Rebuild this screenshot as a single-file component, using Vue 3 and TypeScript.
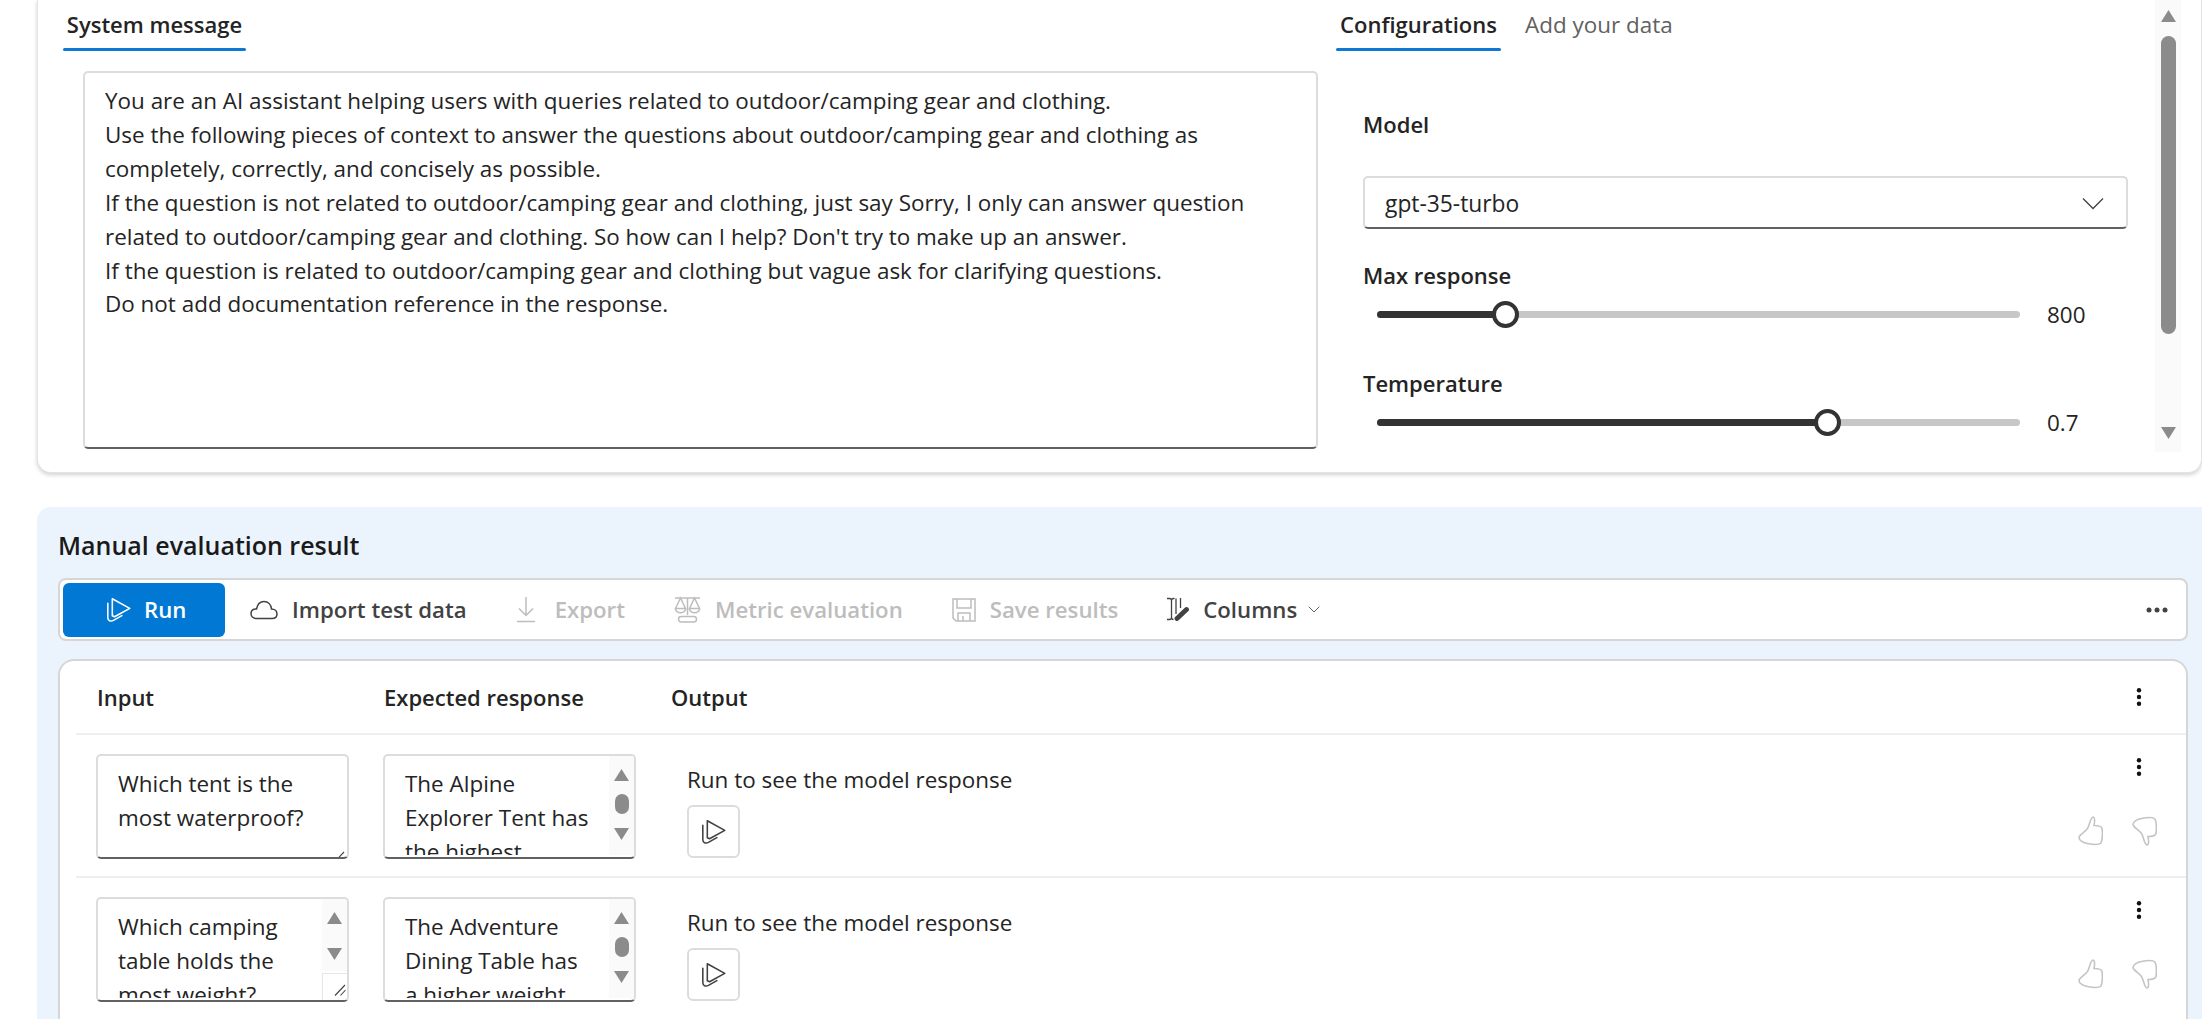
<script setup lang="ts">
const systemLines: string[] = [
  'You are an AI assistant helping users with queries related to outdoor/camping gear and clothing.',
  'Use the following pieces of context to answer the questions about outdoor/camping gear and clothing as completely, correctly, and concisely as possible.',
  "If the question is not related to outdoor/camping gear and clothing, just say Sorry, I only can answer question related to outdoor/camping gear and clothing. So how can I help? Don't try to make up an answer.",
  'If the question is related to outdoor/camping gear and clothing but vague ask for clarifying questions.',
  'Do not add documentation reference in the response.'
]
const sliders = [
  { label: 'Max response', value: '800', pct: 19.9 },
  { label: 'Temperature', value: '0.7', pct: 70 }
]
const rows = [
  { input: 'Which tent is the most waterproof?', expected: 'The Alpine Explorer Tent has the highest', inputScroll: false },
  { input: 'Which camping table holds the most weight?', expected: 'The Adventure Dining Table has a higher weight', inputScroll: true }
]
</script>

<template>
  <div class="page">
    <section class="top-card">
      <div class="left-col">
        <div class="tab active sys-tab">System message</div>
        <div class="sys-box">
          <p v-for="line in systemLines" :key="line">{{ line }}</p>
        </div>
      </div>
      <div class="right-col">
        <div class="tabs">
          <div class="tab active conf-tab">Configurations</div>
          <div class="tab plain">Add your data</div>
        </div>
        <div class="config">
          <label class="field-label model-label">Model</label>
          <div class="select">
            <span>gpt-35-turbo</span>
            <svg width="22" height="13" viewBox="0 0 22 13"><path d="M1 1.5 11 11.5 21 1.5" fill="none" stroke="#424242" stroke-width="1.3"/></svg>
          </div>
          <div v-for="s in sliders" :key="s.label" class="slider-field">
            <label class="field-label">{{ s.label }}</label>
            <div class="slider-row">
              <div class="track">
                <div class="fill" :style="{ width: s.pct + '%' }"></div>
                <div class="thumb" :style="{ left: s.pct + '%' }"></div>
              </div>
              <span class="slider-value">{{ s.value }}</span>
            </div>
          </div>
        </div>
        <div class="scrollbar">
          <svg width="15" height="12" viewBox="0 0 15 12"><path d="M7.5 0 15 12H0Z" fill="#8b8b8b"/></svg>
          <div class="sb-thumb"></div>
          <svg width="15" height="12" viewBox="0 0 15 12"><path d="M7.5 12 15 0H0Z" fill="#8b8b8b"/></svg>
        </div>
      </div>
    </section>

    <section class="panel">
      <h2 class="panel-title">Manual evaluation result</h2>
      <div class="toolbar">
        <button class="run-btn">
          <svg width="27" height="27" viewBox="0 0 24 24" fill="none" stroke="#fff" stroke-width="1.4" stroke-linejoin="round" stroke-linecap="round"><path d="M6.500 2.500 22 11 8.500 18.500 6.500 17.500Z"/><path d="M2.500 6.500V19C2.500 22 5 23 7.500 21.700L15 17.500"/></svg>
          <span>Run</span>
        </button>
        <div class="tool import">
          <svg width="28" height="20" viewBox="0 0 28 20" fill="none" stroke="#424242" stroke-width="1.5"><path d="M7 18.500C3.500 18.500 1 16.500 1 13.500 1 10.500 3.500 8.500 6.500 9 7.500 4 10.500 1.500 14 1.500 18 1.500 21 4.500 21.500 9 24.500 9 27 11 27 14 27 16.800 25 18.500 22 18.500Z"/></svg>
          <span>Import test data</span>
        </div>
        <div class="tool disabled export">
          <svg width="18" height="27" viewBox="0 0 18 27" fill="none" stroke="#bdbdbd" stroke-width="1.500"><path d="M9 1V19M2 12.500 9 19.500 16 12.500M0 25.500H18"/></svg>
          <span>Export</span>
        </div>
        <div class="tool disabled metric">
          <svg width="27" height="27" viewBox="0 0 27 27" fill="none" stroke="#bdbdbd" stroke-width="1.500"><path d="M1 2H26M13.500 2V19M6.500 2 1.500 12.500H11.500ZM20.500 2 15.500 12.500H25.500Z"/><path d="M1.500 12.500C1.500 18 11.500 18 11.500 12.500M15.500 12.500C15.500 18 25.500 18 25.500 12.500"/><rect x="4.500" y="20.500" width="18" height="5.500" rx="2.700"/></svg>
          <span>Metric evaluation</span>
        </div>
        <div class="tool disabled save">
          <svg width="24" height="24" viewBox="0 0 24 24" fill="none" stroke="#bdbdbd" stroke-width="1.500"><path d="M1 1H23V23H4L1 20Z"/><path d="M5 1V10H19V1M6 23V15H18V23M11 18V23"/></svg>
          <span>Save results</span>
        </div>
        <div class="tool columns">
          <svg width="23" height="25" viewBox="0 0 23 25" fill="none" stroke="#424242" stroke-width="1.300"><path d="M1 1.500H3.500C4.800 1.500 5.500 2.200 5.500 3.500V20.500C5.500 21.800 4.800 22.500 3.500 22.500H1M5.500 3.500C5.500 2.200 6.200 1.500 7.500 1.500H8.500M5.500 20.500C5.500 21.800 6.200 22.500 7.500 22.500"/><path d="M10 1.500V17M14.500 1V11"/><path d="M11 21.500 20.500 12.500" stroke-width="4.800" stroke-linecap="round"/></svg>
          <span>Columns</span>
          <svg class="col-chevron" width="12" height="7" viewBox="0 0 12 7"><path d="M.700.700 6 6 11.300.700" fill="none" stroke="#616161" stroke-width="1"/></svg>
        </div>
        <svg class="more" width="22" height="6" viewBox="0 0 22 6" fill="#424242"><circle cx="3" cy="3" r="2.500"/><circle cx="11" cy="3" r="2.500"/><circle cx="19" cy="3" r="2.500"/></svg>
      </div>

      <div class="table">
        <div class="grid-row head">
          <div class="h-cell">Input</div>
          <div class="h-cell">Expected response</div>
          <div class="h-cell out">Output</div>
          <div class="actions">
            <svg class="kebab" width="6" height="18" viewBox="0 0 6 18" fill="#111"><circle cx="3" cy="2.300" r="2.200"/><circle cx="3" cy="9" r="2.200"/><circle cx="3" cy="15.700" r="2.200"/></svg>
          </div>
        </div>
        <div v-for="row in rows" :key="row.input" class="grid-row body">
          <div class="box-cell">
            <div class="text-box">
              <div class="clip" :class="{ narrow: row.inputScroll }">{{ row.input }}</div>
              <div v-if="row.inputScroll" class="mini-sb short">
                <svg width="15" height="12" viewBox="0 0 15 12"><path d="M7.500 0 15 12H0Z" fill="#8b8b8b"/></svg>
                <svg width="15" height="12" viewBox="0 0 15 12"><path d="M7.500 12 15 0H0Z" fill="#8b8b8b"/></svg>
              </div>
              <div class="resizer" :class="{ boxed: row.inputScroll }">
                <svg width="12" height="12" viewBox="0 0 12 12" stroke="#424242" stroke-width="1.100"><path d="M1 11.500 11 1M6.500 11.500 11.500 6"/></svg>
              </div>
            </div>
          </div>
          <div class="box-cell">
            <div class="text-box">
              <div class="clip narrow">{{ row.expected }}</div>
              <div class="mini-sb">
                <svg width="15" height="12" viewBox="0 0 15 12"><path d="M7.500 0 15 12H0Z" fill="#8b8b8b"/></svg>
                <div class="mini-thumb"></div>
                <svg width="15" height="12" viewBox="0 0 15 12"><path d="M7.500 12 15 0H0Z" fill="#8b8b8b"/></svg>
              </div>
            </div>
          </div>
          <div class="out-cell">
            <div class="out-text">Run to see the model response</div>
            <button class="play-btn">
              <svg width="27" height="27" viewBox="0 0 24 24" fill="none" stroke="#424242" stroke-width="1.400" stroke-linejoin="round" stroke-linecap="round"><path d="M6.500 2.500 22 11 8.500 18.500 6.500 17.500Z"/><path d="M2.500 6.500V19C2.500 22 5 23 7.500 21.700L15 17.500"/></svg>
            </button>
          </div>
          <div class="actions">
            <svg class="kebab" width="6" height="18" viewBox="0 0 6 18" fill="#111"><circle cx="3" cy="2.300" r="2.200"/><circle cx="3" cy="9" r="2.200"/><circle cx="3" cy="15.700" r="2.200"/></svg>
            <div class="thumbs">
              <svg width="25" height="30" viewBox="0 0 25 30" fill="none" stroke="#c4c4c4" stroke-width="1.600"><path d="M15 1C17.500 1.500 16.500 7 16 9.500 19.500 9.500 23.500 10 24 12.500 24.500 16.500 24.300 24 23 27 20.500 29.500 14.500 28.500 9.500 27.500 5.500 27 1 24.500 1 21.500 1.500 18.500 6.500 16.500 9.500 12.500 11.500 9.500 12.500 1 15 1Z"/></svg>
              <svg width="25" height="30" viewBox="0 0 25 30" fill="none" stroke="#c4c4c4" stroke-width="1.600"><path transform="matrix(1 0 0 -1 0 30)" d="M15 1C17.500 1.500 16.500 7 16 9.500 19.500 9.500 23.500 10 24 12.500 24.500 16.500 24.300 24 23 27 20.500 29.500 14.500 28.500 9.500 27.500 5.500 27 1 24.500 1 21.500 1.500 18.500 6.500 16.500 9.500 12.500 11.500 9.500 12.500 1 15 1Z"/></svg>
            </div>
          </div>
        </div>
      </div>
    </section>
  </div>
</template>

<style>
html, body { margin: 0; background: #fff; overflow: hidden; }
</style>

<style scoped>
.page {
  width: 2202px;
  height: 1019px;
  overflow: hidden;
  box-sizing: border-box;
  padding-left: 37px;
  font-family: "Open Sans", "Noto Sans", sans-serif;
  font-size: 22.45px;
  color: #242424;
}
.page * { box-sizing: border-box; }

.top-card {
  height: 473px;
  display: grid;
  grid-template-columns: 1298px 1fr;
  background: #fff;
  border: 1px solid #e4e4e4;
  border-top: 0;
  border-radius: 0 0 14px 14px;
  box-shadow: 0 2px 4px rgba(0, 0, 0, 0.18);
}
.left-col { padding-left: 25px; }
.tab {
  height: 51px;
  padding-top: 8px;
  line-height: 34px;
  display: inline-block;
  text-align: center;
  white-space: nowrap;
}
.tab.active { font-weight: 600; font-size: 22px; line-height: 32px; position: relative; }
.tab.active::after {
  content: "";
  position: absolute;
  left: 0;
  right: 0;
  bottom: 0;
  height: 3px;
  border-radius: 2px;
  background: #0f78d4;
}
.sys-tab { width: 183px; }
.sys-box {
  margin: 20px 0 0 20px;
  width: 1235px;
  height: 378px;
  padding: 11px 20px 0;
  border: 2px solid #dcdcdc;
  border-bottom-color: #616161;
  border-radius: 5px;
  line-height: 33.9px;
  background: #fff;
}
.sys-box p { margin: 0; }

.right-col { position: relative; }
.tabs { display: flex; gap: 24px; }
.conf-tab { width: 165px; }
.plain { color: #616161; }
.config { width: 765px; margin-left: 27px; }
.field-label { display: block; font-weight: 600; font-size: 22px; line-height: 34px; }
.model-label { margin-top: 56px; }
.select {
  margin-top: 35px;
  height: 53px;
  border: 2px solid #dcdcdc;
  border-bottom-color: #616161;
  border-radius: 5px;
  padding: 1px 22px 0 20px;
  display: flex;
  align-items: center;
  justify-content: space-between;
  font-size: 22.8px;
}
.slider-field { height: 108px; }
.select + .slider-field { margin-top: 29px; }
.slider-row { display: flex; align-items: center; height: 26px; margin-top: 9px; padding-left: 14px; }
.track { position: relative; width: 643px; height: 7px; border-radius: 4px; background: #c7c7c7; }
.fill { height: 7px; border-radius: 4px; background: #333; }
.thumb {
  position: absolute;
  top: -10px;
  width: 27px;
  height: 27px;
  margin-left: -13px;
  border: 4px solid #333;
  border-radius: 50%;
  background: #fff;
}
.slider-value { margin-left: 27px; }

.scrollbar {
  position: absolute;
  top: 0;
  left: 819px;
  width: 26px;
  height: 452px;
  background: #fafafa;
  display: flex;
  flex-direction: column;
  align-items: center;
  padding-top: 10px;
}
.sb-thumb { width: 15px; height: 298px; margin: 14px 0 93px; border-radius: 8px; background: #8b8b8b; }

.panel {
  margin-top: 34px;
  height: 600px;
  background: #ebf3fc;
  border-radius: 14px 0 0 0;
  padding: 18px 14px 0 21px;
}
.panel-title {
  margin: 0;
  font-size: 25px;
  font-weight: 600;
  line-height: 40px;
  color: #1a1a1a;
}
.toolbar {
  margin-top: 13px;
  height: 63px;
  background: #fff;
  border: 2px solid #d6d6d6;
  border-radius: 8px;
  display: flex;
  align-items: center;
  padding-left: 3px;
  font-size: 22.2px;
  font-weight: 600;
}
.run-btn {
  width: 162px;
  height: 54px;
  border: 0;
  border-radius: 6px;
  background: #0078d4;
  color: #fff;
  font: inherit;
  font-weight: 600;
  display: flex;
  align-items: center;
  padding: 0 0 0 42px;
  gap: 12px;
}
.tool { display: flex; align-items: center; gap: 14px; color: #424242; white-space: nowrap; }
.tool.disabled { color: #bdbdbd; }
.import { margin-left: 25px; }
.export { margin-left: 50px; gap: 20px; }
.metric { margin-left: 49px; }
.save { margin-left: 49px; gap: 14px; }
.columns { margin-left: 48px; gap: 14px; }
.col-chevron { margin-left: -3px; }
.more { margin-left: auto; margin-right: 18px; }

.table {
  margin-top: 18px;
  height: 500px;
  background: #fff;
  border: 2px solid #d6d6d6;
  border-bottom: 0;
  border-radius: 16px 16px 0 0;
  padding-left: 16px;
}
.grid-row {
  display: grid;
  grid-template-columns: 308px 287px 1fr 110px;
  border-bottom: 2px solid #efefef;
}
.head { height: 74px; align-items: start; }
.body { height: 143px; }
.h-cell { padding-left: 21px; padding-top: 20px; font-size: 22px; line-height: 32px; font-weight: 600; white-space: nowrap; }
.h-cell + .h-cell { padding-left: 0; }
.box-cell { padding-top: 19px; padding-left: 20px; }
.box-cell + .box-cell { padding-left: 0; }
.box-cell + .box-cell .text-box { margin-left: -1px; }
.text-box {
  position: relative;
  width: 253px;
  height: 105px;
  border: 2px solid #dcdcdc;
  border-bottom-color: #616161;
  border-radius: 5px;
  display: flex;
  overflow: hidden;
}
.clip {
  flex: 1;
  height: 99px;
  padding: 11px 8px 0 20px;
  line-height: 34px;
  overflow: hidden;
}
.clip.narrow { padding-right: 16px; }
.mini-sb {
  width: 25px;
  flex: none;
  height: 99px;
  background: #fafafa;
  display: flex;
  flex-direction: column;
  align-items: center;
  padding-top: 13px;
}
.mini-sb.short { gap: 24px; height: 72px; }
.mini-thumb { width: 14px; height: 20px; margin: 13px 0 14px; border-radius: 7px; background: #8b8b8b; }
.resizer {
  position: absolute;
  right: 0;
  bottom: 4px;
  width: 14px;
  height: 14px;
}
.resizer.boxed {
  width: 25px;
  height: 27px;
  bottom: 0;
  background: #fff;
  border: 1px solid #e6e6e6;
  border-right: 0;
  border-bottom: 0;
  display: flex;
  align-items: flex-end;
  justify-content: flex-end;
  padding: 0 1px 4px 0;
}
.out-cell { padding: 28px 0 0 16px; }
.out-text { line-height: 34px; }
.play-btn {
  display: flex;
  align-items: center;
  justify-content: center;
  margin-top: 8px;
  width: 53px;
  height: 53px;
  border: 2px solid #dcdcdc;
  border-radius: 6px;
  background: #fff;
  padding: 0;
}
.actions { display: flex; flex-direction: column; align-items: flex-start; }
.kebab { margin-left: 60px; margin-top: 23px; }
.thumbs { display: flex; gap: 29px; margin-top: 40px; margin-left: 2px; }
.head .kebab { margin-top: 27px; }
</style>
